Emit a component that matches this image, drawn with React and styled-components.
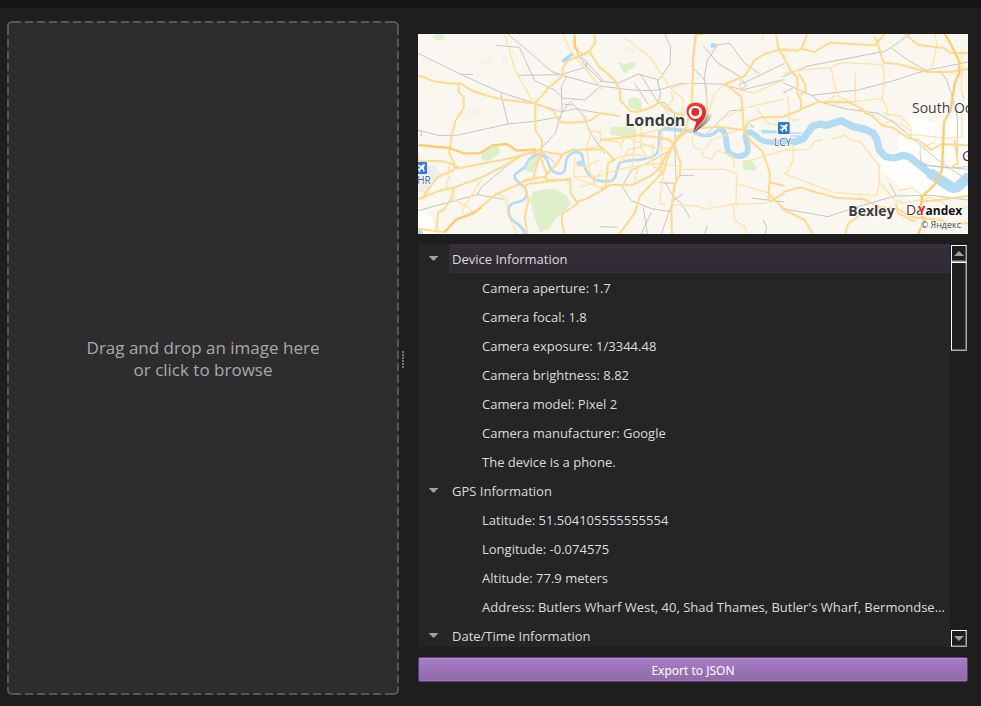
import React, { useState } from "react";
import styled, { createGlobalStyle, css } from "styled-components";

const GlobalStyle = createGlobalStyle`
  * { box-sizing: border-box; }
  body {
    margin: 0;
    background: #1e1e1e;
    color: #dcdcdc;
    font-family: "Open Sans", "Noto Sans", sans-serif;
    font-size: 13px;
  }
  button { font: inherit; color: inherit; }
`;

const Window = styled.div`
  display: flex;
  flex-direction: column;
  height: 100vh;
  overflow: hidden;
`;

const TopStrip = styled.div`
  flex: none;
  height: 8px;
  background: #161616;
`;

const Main = styled.main`
  flex: 1;
  min-height: 0;
  display: grid;
  grid-template-columns: minmax(0, 392fr) 19px minmax(0, 550fr);
  padding: 13px 13px 11px 7px;
`;

const dashes = (direction) =>
  `repeating-linear-gradient(${direction}, #000 0 2px, transparent 2px 6px, #000 6px 12px)`;
const solid = "linear-gradient(#000, #000)";

const DropZone = styled.button`
  position: relative;
  padding: 2px 0 0;
  border: 0;
  border-radius: 5px;
  background: #2d2d2f;
  color: #a9a9a9;
  font-family: "Open Sans", sans-serif;
  font-size: 17px;
  line-height: 22px;
  text-align: center;
  cursor: pointer;

  &::before {
    content: "";
    position: absolute;
    inset: 0;
    border: 2px solid #575757;
    border-radius: 5px;
    mask:
      ${dashes("90deg")} top / 100% 2px no-repeat,
      ${dashes("90deg")} bottom / 100% 2px no-repeat,
      ${dashes("180deg")} left / 2px 100% no-repeat,
      ${dashes("180deg")} right / 2px 100% no-repeat,
      ${solid} top left / 8px 8px no-repeat,
      ${solid} top right / 8px 8px no-repeat,
      ${solid} bottom left / 8px 8px no-repeat,
      ${solid} bottom right / 8px 8px no-repeat;
  }
`;

const Splitter = styled.div`
  display: flex;
  align-items: center;
  padding: 2px 0 0 3px;
  cursor: col-resize;
`;

const Grip = styled.span`
  width: 2px;
  height: 17px;
  background: repeating-linear-gradient(#777 0 2px, transparent 2px 3px);
`;

const Details = styled.section`
  display: flex;
  flex-direction: column;
  min-height: 0;
  padding: 13px 0;
`;

const MapView = styled.svg`
  flex: none;
  display: block;
  width: 100%;
  height: 200px;
  background: #faf7f0;
`;

const TreePanel = styled.div`
  flex: 1;
  min-height: 0;
  display: flex;
  margin: 10px 0;
`;

const Tree = styled.ul`
  flex: 1;
  min-width: 0;
  margin: 0;
  padding: 0;
  list-style: none;
  overflow: hidden;
  background: #252525;
`;

const Branch = styled.li``;

const BranchHeader = styled.button`
  display: flex;
  width: 100%;
  height: 29px;
  padding: 0;
  border: 0;
  background: none;
  text-align: left;
  line-height: 29px;
`;

const ArrowCell = styled.span`
  flex: none;
  width: 31px;
  height: 29px;
  display: flex;
  align-items: center;
  justify-content: center;
`;

const Arrow = styled.span`
  width: 10px;
  height: 5px;
  background: #a0a0a0;
  clip-path: ${(p) =>
    p.$up ? "polygon(50% 0, 100% 100%, 0 100%)" : "polygon(0 0, 100% 0, 50% 100%)"};
`;

const BranchTitle = styled.span`
  flex: 1;
  height: 29px;
  padding: 1px 0 0 3px;
  border-radius: 2px;
  ${(p) =>
    p.$selected &&
    css`
      background: linear-gradient(#372f3b, #2e2932);
      box-shadow: inset 0 0 0 1px #372d3f;
    `}
`;

const Leaves = styled.ul`
  margin: 0;
  padding: 0;
  list-style: none;
`;

const Leaf = styled.li`
  height: 29px;
  padding: 1px 0 0 64px;
  line-height: 29px;
  white-space: nowrap;
  overflow: hidden;
`;

const ScrollTrack = styled.div`
  flex: none;
  width: 18px;
  display: flex;
  flex-direction: column;
  padding: 0 1px;
  background: #1e1e1e;
`;

const raised = css`
  border: 1px solid;
  border-color: #fff #a8a8a8 #a8a8a8 #fff;
  box-shadow: inset -1px -1px 0 #666;
`;

const ScrollButton = styled.button`
  flex: none;
  height: 17px;
  padding: 0;
  display: flex;
  align-items: center;
  justify-content: center;
  background: #1e1e1e;
  margin-top: ${(p) => (p.$end ? "auto" : "1px")};
  ${raised}
`;

const ScrollThumb = styled.div`
  flex: none;
  height: 22%;
  ${raised}
`;

const ExportButton = styled.button`
  flex: none;
  height: 25px;
  padding: 2px 0 0;
  border: 1px solid #5e3d74;
  border-radius: 2px;
  background: linear-gradient(#a77cc5, #8f6aa9);
  box-shadow: inset 0 1px 0 #b88fd4, inset 0 -1px 0 #9d75b8;
  color: #fff;
  font-family: "Noto Sans", sans-serif;
  font-size: 12px;
  line-height: 21px;
`;

const MAJOR = [
  // west
  "M0 138L18 141L45 154L90 160L128 160L158 180L210 198L250 208L345 220L378 230L406 242L416 262L428 276L455 278L490 276L520 270L545 252L560 248",
  "M121 160L122 185L137 203L137 235L112 273L100 320L94 370L108 398L108 415L126 414",
  "M352 218L352 300L372 330L372 350L366 380L378 410L386 430L382 448",
  "M350 220L372 196L395 170L432 140L436 110L450 92L486 78L515 62L532 38L530 12",
  "M470 14L470 48L480 66L498 74L514 64L548 118",
  "M0 395L45 392L78 394L108 405L126 414L200 400L270 386L340 368L362 362",
  "M0 508L60 484L110 472L190 442L250 412L320 372L355 368",
  "M12 508L25 485L60 440L108 420",
  "M108 474L98 510L76 540L60 548L54 608",
  "M0 596L80 606L115 568L172 546L195 526L235 492L305 462L320 450L380 440L420 398L435 372L462 360L555 358",
  "M366 368L358 400L346 446L318 454",
  "M372 364L432 374",
  "M382 442L386 450L456 450L458 490L476 516L506 506L560 476",
  "M318 464L332 510L320 560L328 612",
  "M458 446L330 462L318 470",
  "M480 520L432 552L432 580L440 612",
  // centre
  "M546 112L570 132L590 150L606 182L606 210L638 244L660 246L710 228L722 216L746 236L772 250L800 256",
  "M546 250L606 258",
  "M856 12L834 15L826 90L822 210L806 290L772 330L744 396L740 420L666 498L650 550L604 612",
  "M546 480L580 464L640 466L694 440L720 420L742 380L760 352L786 320L820 296",
  "M546 330L606 324L660 316L720 322L756 330L770 346L788 400L786 430L768 470L760 545L762 612",
  "M820 296L900 290L978 300",
  "M562 480L570 400L590 390L556 355L546 350",
  "M978 300L970 200L922 162L980 138L1010 90L1040 72L1080 60L1110 58",
  "M1074 12L1082 60L1100 82",
  "M978 300L1000 335L1032 362L1056 430L1052 490L1100 540",
  "M980 300L992 275L1030 262L1100 260",
  "M1050 496L1056 515L1100 488",
  "M1052 456L1100 468",
  // east
  "M1095 60L1140 62L1150 56L1188 66L1218 48L1240 38L1370 46L1384 30L1400 12",
  "M1150 56L1168 12",
  "M1095 80L1118 120L1138 144L1138 190L1150 212L1148 240L1095 260",
  "M1142 130L1160 160L1164 184L1146 194",
  "M1370 20L1382 50L1392 85L1398 98L1440 102L1528 126L1600 126L1650 116",
  "M1460 12L1500 44L1580 55L1595 68L1650 70",
  "M1148 238L1200 216L1290 216L1320 230L1338 246L1364 258L1392 286L1426 294L1470 324L1500 330L1540 360L1570 342L1650 346",
  "M1095 485L1150 472L1190 486L1260 504L1340 508L1380 530L1440 538L1484 562L1570 570L1590 582L1650 580",
  "M1095 538L1160 570L1184 612",
  "M1282 612L1290 582L1330 552L1390 538",
  "M1434 520L1440 550L1490 575",
  "M1610 330L1620 400L1595 414",
  "M1505 515L1560 510L1650 498",
];

const ORANGE = [
  "M1580 12L1600 44L1624 96L1624 130L1610 160L1598 240L1578 276L1572 420L1552 462L1512 500L1506 550L1520 570L1500 612",
  "M0 345L92 354L138 370L185 370L225 346L265 342L298 362L355 358",
  "M80 606L115 568L165 550L190 532",
  "M470 14L470 48L480 66",
];

const MINOR = [
  "M260 12L290 118L345 216", "M434 12L460 66L555 180", "M190 450L140 528L132 556",
  "M92 408L94 440L84 468L108 490L108 510L148 530L166 548", "M236 488L266 508L268 550L298 612",
  "M488 250L515 300L550 308", "M520 304L506 350L512 410L530 465L540 474",
  "M470 380L468 440L555 438", "M470 444L540 470L560 474", "M500 358L540 350L548 330L546 300",
  "M486 470L530 460L550 420", "M545 390L505 410L476 408",
  "M620 22L700 85L728 128L760 178L796 205L792 250L800 276", "M758 176L782 166L830 158",
  "M760 182L764 210L740 238L752 255", "M600 300L650 332L700 350L764 358",
  "M610 400L630 360L690 345L732 360", "M580 390L640 372L700 382L708 410L740 430",
  "M610 345L620 325L720 300L742 290", "M650 300L646 380L640 430",
  "M560 430L640 410L720 400L790 410", "M614 356L600 336L560 330",
  "M704 344L704 390L660 412L650 460", "M732 300L730 400L735 440L724 520L742 524",
  "M670 290L668 350L690 386", "M790 418L920 418L956 432L954 520",
  "M766 524L840 528L860 538L950 522L1050 520", "M946 522L950 570L982 592L986 612",
  "M822 320L826 350L850 360L856 380L880 388L898 362L944 378L950 416",
  "M860 360L880 330L960 300", "M868 160L866 250", "M898 276L970 236L1095 208",
  "M920 164L890 190L860 280", "M970 138L966 180L1006 190L1100 148", "M1020 240L1050 280L1100 288",
  "M958 462L1050 488", "M1032 30L1036 12", "M974 398L1100 360L1174 358L1190 334L1212 330",
  "M1095 130L1170 118L1238 112L1258 196L1330 234L1354 254",
  "M1238 112L1270 98L1395 104L1400 150L1392 205L1410 240L1400 256",
  "M1250 198L1234 208L1232 226L1262 220L1392 206", "M1312 130L1312 218",
  "M1390 290L1420 270L1478 300L1480 324", "M1400 252L1448 258L1478 292",
  "M1240 328L1280 316L1300 330L1328 336L1384 408L1384 460L1376 496L1250 488L1095 430",
  "M1384 456L1430 510L1460 520", "M1125 345L1126 386L1110 426L1095 430",
  "M1550 12L1558 44L1538 128", "M1632 60L1630 180L1638 210", "M1632 250L1632 320L1590 325L1485 314",
  "M1506 378L1508 352L1550 338", "M1440 482L1484 474L1518 500", "M1420 530L1410 560L1370 540",
  "M1330 508L1325 490", "M1456 520L1540 502L1580 522L1592 550L1650 530",
  "M1110 200L1115 270L1140 270", "M0 480L30 490", "M0 370L4 392",
];

const RAIL = [
  "M0 70L130 134L250 188L350 220L430 246L470 236L560 252", "M130 133L164 133",
  "M232 46L304 52L350 152L410 180L434 204L500 210L548 168L490 152L440 138L400 124L350 80L270 12",
  "M302 136L430 134L506 110L476 70L500 90L555 150", "M0 300L60 316L116 316L270 282L350 274L430 260",
  "M248 190L270 280", "M10 318V305L0 300", "M446 140L430 170L432 245L412 310L364 360L300 380L190 472L178 494L0 542",
  "M178 494L256 508", "M432 246L458 214L500 260L512 300L560 372", "M434 222L464 225", "M364 360L410 398",
  "M505 96L506 110L555 158", "M546 152L600 160L660 132L722 150L756 102L758 50L740 12",
  "M546 168L640 180L700 182L730 178L790 160L910 162L972 180L1100 148",
  "M668 134L720 218L740 218L770 250L772 340", "M718 150L728 190L720 220", "M650 160L690 222",
  "M832 12L822 110L860 150L868 230L866 270", "M858 148L868 90L900 44L936 40L980 100L1025 132",
  "M854 46L900 100L966 140L984 166L970 180L965 162L980 158L1100 100",
  "M764 356L690 400L640 420L612 470L640 512L700 536L760 545", "M770 340L774 450L762 520L730 612",
  "M724 458L770 460L786 436L828 436", "M740 456L770 504L790 520L816 564", "M766 512L796 490",
  "M700 546L670 612", "M676 532L688 612", "M868 586L860 612", "M1036 570L1046 590L1042 612", "M1000 504L1100 516",
  "M866 312L936 242L980 240", "M546 590L600 592",
  "M1095 140L1170 108L1400 64L1420 52L1476 12", "M1420 54L1470 90L1490 102L1528 124",
  "M1095 158L1180 196L1320 180L1420 154L1520 122L1650 96", "M1095 190L1128 172",
  "M1180 196L1206 216L1280 236L1380 250L1430 280L1560 390L1650 452",
  "M1564 120L1586 150L1600 190L1618 260L1618 400", "M1508 370L1508 394L1528 406L1650 418",
  "M1095 536L1230 560L1320 530L1430 498L1540 496L1650 510", "M1414 458L1434 496", "M1506 404L1590 414L1650 410",
];

function Airport({ x, y }) {
  return (
    <g transform={`translate(${x} ${y})`}>
      <rect width="35" height="36" rx="4" fill="#2f78e0" />
      <path
        d="M28 7C25 5 22 8 19 11L9 8L6 11L15 16L11 21L6 20L4 22L10 25L13 31L15 29L15 24L20 20L25 29L28 26L25 16C28 13 30 10 28 7Z"
        fill="#fff"
      />
    </g>
  );
}

function LondonMap() {
  return (
    <MapView viewBox="0 12 1650 600" preserveAspectRatio="xMidYMid slice" role="img" aria-label="Map of London">
      <defs>
        <linearGradient id="pinShadow" x1="0" y1="1" x2="1" y2="0">
          <stop offset="0" stopColor="#222" stopOpacity=".9" />
          <stop offset="1" stopColor="#666" stopOpacity=".15" />
        </linearGradient>
        <linearGradient id="pinFill" x1="0" y1="0" x2="0" y2="1">
          <stop offset="0" stopColor="#ee3a38" />
          <stop offset="1" stopColor="#cf1d22" />
        </linearGradient>
      </defs>
      <rect y="12" width="1650" height="600" fill="#faf7f0" />
      <path d="M1476 256L1540 276L1650 240V500L1540 510L1500 540L1440 460L1400 430L1380 390L1440 360L1440 320L1480 290ZM0 542L40 560L60 612H0Z" fill="#fffefa" />
      <path d="M0 404L50 408L76 440L40 452L34 480L0 486Z" fill="#edecf1" />
      <path
        d="M252 72L268 68L270 110L254 116ZM130 246L180 230L186 254L150 278ZM186 96L226 82L220 112ZM590 66L660 40L650 66ZM860 525L890 514L880 530Z"
        fill="#f6f3ec"
      />
      <g fill="#ddf0c9">
        <path d="M42 18L58 12L82 16L72 30L58 33ZM190 366L240 346L246 370L212 392L190 390ZM318 420L350 376L360 386L346 430Z" />
        <path d="M336 506L346 486L376 478L414 478L444 496L460 522L410 570L394 596L366 606L346 552Z" />
        <path d="M602 96L620 102L650 94L654 110L632 120L624 132L610 118ZM630 208L650 200L668 210L672 242L654 240L632 230Z" />
        <path d="M576 292L650 288L656 314L626 322L578 314ZM974 394L996 390L1016 410L1012 424L976 418Z" />
      </g>
      <g fill="none" stroke="#b3dcf3" strokeLinejoin="round" strokeLinecap="round">
        <path
          strokeWidth="8"
          d="M320 612C316 586 290 580 276 562C262 530 280 518 300 516C326 510 332 494 320 472C302 456 288 450 290 436C296 424 316 420 322 408C334 380 348 372 366 374C392 380 390 406 400 420C416 434 436 434 440 420C446 392 442 372 474 366C500 366 492 390 500 410C510 436 530 454 560 454C600 458 590 430 604 400C614 388 660 394 690 384C726 376 722 362 724 306L740 296"
        />
        <path strokeWidth="11" d="M740 296L800 302L826 304C850 318 876 326 900 300L918 302" />
        <path strokeWidth="17" d="M914 302C934 318 916 350 936 370C956 384 980 380 988 366C996 346 974 322 984 310C1004 296 1016 330 1040 334C1070 340 1100 336 1130 334" />
        <path
          strokeWidth="22"
          d="M1130 335L1156 326L1184 288L1208 282L1226 286L1270 272L1306 290L1342 298L1366 310L1376 326L1384 360L1402 380L1426 384L1456 376L1476 382L1546 438"
        />
        <path strokeWidth="32" strokeLinecap="butt" d="M1534 428L1594 468Q1610 478 1622 468L1655 438" />
        <path strokeWidth="5" d="M1030 302L1074 304M1034 308L1074 308M1118 309L1150 309M1120 318L1144 318M998 285L1006 291" />
      </g>
      <path
        d="M430 90L462 66L470 72L448 92L434 98ZM476 394L492 392L494 408L476 408ZM0 598L14 602L16 612H0ZM876 44L886 38L896 42L894 52L880 54Z"
        fill="#b3dcf3"
      />
      <g fill="none" strokeLinejoin="round">
        <path d={RAIL.join("")} stroke="#c5c5c3" strokeWidth="3" />
        <path d={MINOR.join("")} stroke="#ffe2a8" strokeWidth="4" />
        <path d={MAJOR.join("")} stroke="#ffd98c" strokeWidth="6" />
        <path d={ORANGE.join("")} stroke="#ffcb70" strokeWidth="7" />
      </g>
      <g fontFamily="'Open Sans', sans-serif" fill="#3c3c3c" stroke="#fff" strokeWidth="4" paintOrder="stroke" strokeLinejoin="round">
        <text x="622" y="288" fontSize="48" fontWeight="700">London</text>
        <text x="1291" y="557" fontSize="42" fontWeight="700">Bexley</text>
        <text x="1482" y="250" fontSize="42">South Ockendon</text>
        <text x="1632" y="392" fontSize="42">Grays</text>
        <text x="1464" y="556" fontSize="42">Da</text>
        <text x="-18" y="462" fontSize="30" fill="#42639f">LHR</text>
        <text x="1068" y="348" fontSize="30" fill="#42639f">LCY</text>
      </g>
      <Airport x={-8} y={396} />
      <Airport x={1080} y={276} />
      <path d="M824 310C835 280 850 256 878 252C890 262 866 284 824 310Z" fill="url(#pinShadow)" />
      <path
        d="M822 312L834 276C796 268 794 218 832 217C870 216 874 256 852 276C842 286 832 302 822 312Z"
        fill="url(#pinFill)"
        stroke="#fff"
        strokeWidth="2"
      />
      <circle cx="832" cy="247" r="20" fill="#fff" />
      <circle cx="832" cy="246" r="12" fill="#e5282b" />
      <g fontFamily="'Open Sans', sans-serif" stroke="#fff" strokeWidth="3" paintOrder="stroke">
        <text x="1500" y="556" fontSize="36" fontWeight="700">
          <tspan fill="#f21818">Y</tspan>
          <tspan fill="#111">andex</tspan>
        </text>
        <text x="1508" y="595" fontSize="27" fill="#444">© Яндекс</text>
      </g>
    </MapView>
  );
}

const GROUPS = [
  {
    title: "Device Information",
    items: [
      "Camera aperture: 1.7",
      "Camera focal: 1.8",
      "Camera exposure: 1/3344.48",
      "Camera brightness: 8.82",
      "Camera model: Pixel 2",
      "Camera manufacturer: Google",
      "The device is a phone.",
    ],
  },
  {
    title: "GPS Information",
    items: [
      "Latitude: 51.504105555555554",
      "Longitude: -0.074575",
      "Altitude: 77.9 meters",
      "Address: Butlers Wharf West, 40, Shad Thames, Butler's Wharf, Bermondse...",
    ],
  },
  { title: "Date/Time Information", items: [] },
];

export default function App() {
  const [selected, setSelected] = useState(GROUPS[0].title);
  return (
    <>
      <GlobalStyle />
      <Window>
        <TopStrip />
        <Main>
          <DropZone type="button">
            Drag and drop an image here
            <br />
            or click to browse
          </DropZone>
          <Splitter role="separator" aria-orientation="vertical">
            <Grip />
          </Splitter>
          <Details>
            <LondonMap />
            <TreePanel>
              <Tree>
                {GROUPS.map(({ title, items }) => (
                  <Branch key={title}>
                    <BranchHeader type="button" aria-expanded="true" onClick={() => setSelected(title)}>
                      <ArrowCell>
                        <Arrow />
                      </ArrowCell>
                      <BranchTitle $selected={selected === title}>{title}</BranchTitle>
                    </BranchHeader>
                    <Leaves>
                      {items.map((item) => (
                        <Leaf key={item}>{item}</Leaf>
                      ))}
                    </Leaves>
                  </Branch>
                ))}
              </Tree>
              <ScrollTrack>
                <ScrollButton type="button" aria-label="Scroll up">
                  <Arrow $up />
                </ScrollButton>
                <ScrollThumb />
                <ScrollButton type="button" aria-label="Scroll down" $end>
                  <Arrow />
                </ScrollButton>
              </ScrollTrack>
            </TreePanel>
            <ExportButton type="button">Export to JSON</ExportButton>
          </Details>
        </Main>
      </Window>
    </>
  );
}
